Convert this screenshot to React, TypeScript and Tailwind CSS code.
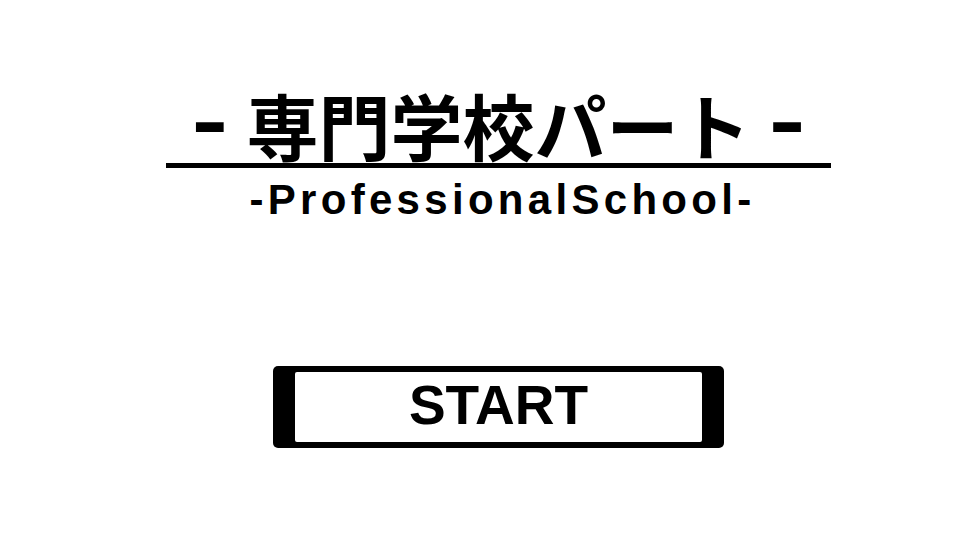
export default function App() {
  return (
    <div className="flex h-[540px] w-[960px] flex-col items-center bg-white pl-[37px] text-black">
      <div className="mt-[88px] flex w-[665px] justify-center border-b-[5px] border-black pb-[3px]">
        <h1 className="flex items-center gap-[21px] whitespace-nowrap">
          <span className="mt-[-6px] inline-block scale-y-[1.75] text-[56px] leading-[56px] font-bold [font-family:'Liberation_Sans',Arial,sans-serif]">–</span>
          <span className="text-[72px] leading-[72px] font-bold [font-family:'Noto_Sans_CJK_JP',sans-serif]">専門学校パート</span>
          <span className="mt-[-6px] inline-block scale-y-[1.75] text-[56px] leading-[56px] font-bold [font-family:'Liberation_Sans',Arial,sans-serif]">–</span>
        </h1>
      </div>
      <p className="mt-[11px] ml-[8px] text-[42px] leading-[42px] font-bold tracking-[4.3px] [font-family:'Liberation_Sans',Arial,sans-serif]">
        -ProfessionalSchool-
      </p>
      <button className="mt-[145px] flex h-[82px] w-[451px] rounded-[5px] bg-black px-[22px] py-[6px]">
        <span className="flex h-full w-full items-center justify-center rounded-[2px] bg-white pb-[4px] text-[55px] font-bold text-black [font-family:'Liberation_Sans',Arial,sans-serif]">
          START
        </span>
      </button>
    </div>
  )
}
